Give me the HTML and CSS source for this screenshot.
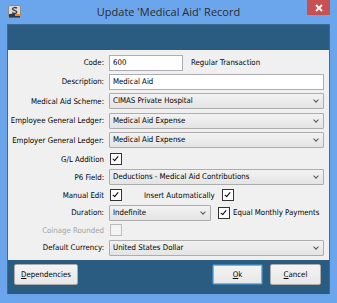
FILE: index.html
```html
<!DOCTYPE html>
<html lang="en">
<head>
    <meta charset="UTF-8">
    <meta name="viewport" content="width=device-width, initial-scale=1.0">
    <title>Update 'Medical Aid' Record</title>
    <link rel="stylesheet" href="styles.css">
</head>
<body>
    <div class="window">
        <div class="titlebar">
            <svg class="app-icon" width="13" height="13" viewBox="0 0 13 13">
                <rect x="0.5" y="0.5" width="12" height="12" rx="1.5" fill="#d9d9d9" stroke="#8c8c8c"/>
                <rect x="1" y="9" width="11" height="3.5" fill="#2b3a4a"/>
                <rect x="7" y="9" width="5.5" height="2" fill="#f08a1c"/>
                <path d="M9 3.2 C8 2.2 4.5 2.2 4.5 4 C4.5 5.8 8.8 5 8.8 7 C8.8 8.8 5 8.8 4 7.8" fill="none" stroke="#3a3a3a" stroke-width="1.3"/>
            </svg>
            <div class="title">Update 'Medical Aid' Record</div>
            <div class="close">
                <svg width="8" height="8" viewBox="0 0 8 8">
                    <path d="M1 1 L7 7 M7 1 L1 7" stroke="#fff" stroke-width="1.8"/>
                </svg>
            </div>
        </div>

        <div class="client">
            <div class="banner"></div>

            <div class="form">
                <div class="lbl">Code:</div>
                <div class="field">
                    <div class="edit code">600</div>
                    <span class="note">Regular Transaction</span>
                </div>

                <div class="lbl">Description:</div>
                <div class="field"><div class="edit wide">Medical Aid</div></div>

                <div class="lbl">Medical Aid Scheme:</div>
                <div class="field"><div class="combo wide">CIMAS Private Hospital<span class="chev"></span></div></div>

                <div class="lbl">Employee General Ledger:</div>
                <div class="field"><div class="combo wide">Medical Aid Expense<span class="chev"></span></div></div>

                <div class="lbl">Employer General Ledger:</div>
                <div class="field"><div class="combo wide">Medical Aid Expense<span class="chev"></span></div></div>

                <div class="lbl">G/L Addition</div>
                <div class="field"><span class="check on"></span></div>

                <div class="lbl">P6 Field:</div>
                <div class="field"><div class="combo wide">Deductions - Medical Aid Contributions<span class="chev"></span></div></div>

                <div class="lbl">Manual Edit</div>
                <div class="field">
                    <span class="check on"></span>
                    <span class="insert-lbl">Insert Automatically</span>
                    <span class="check on"></span>
                </div>

                <div class="lbl">Duration:</div>
                <div class="field">
                    <div class="combo duration">Indefinite<span class="chev"></span></div>
                    <span class="check on"></span>
                    <span class="check-lbl">Equal Monthly Payments</span>
                </div>

                <div class="lbl disabled">Coinage Rounded</div>
                <div class="field"><span class="check off"></span></div>

                <div class="lbl">Default Currency:</div>
                <div class="field"><div class="combo wide">United States Dollar<span class="chev"></span></div></div>
            </div>

            <div class="footer">
                <button class="btn deps"><u>D</u>ependencies</button>
                <div class="spacer"></div>
                <button class="btn default"><u>O</u>k</button>
                <button class="btn"><u>C</u>ancel</button>
            </div>
        </div>
    </div>
</body>
</html>
```

FILE: styles.css
```css
:root {
    --frame: #6ba6ec;
    --navy: #2a5b80;
    --navy-line: #3d6b92;
    --face: #f0f0f0;
    --text: #000;
}

html, body {
    margin: 0;
    padding: 0;
}

body {
    background: var(--frame);
    font-family: "DejaVu Sans Condensed", "DejaVu Sans", sans-serif;
    font-stretch: condensed;
    font-size: 7.8px;
    color: var(--text);
}

.window {
    width: 337px;
    height: 303px;
    box-sizing: border-box;
    padding: 0 7px 10px 7px;
    background: var(--frame);
}

/* Title bar */
.titlebar {
    height: 24px;
    display: grid;
    grid-template-columns: 23px 1fr 23px;
    align-items: start;
}

.app-icon {
    margin: 5px 0 0 1px;
    display: block;
}

.title {
    font-family: "Open Sans", "Liberation Sans", sans-serif;
    font-stretch: normal;
    font-size: 11px;
    color: #2b2b2b;
    text-align: center;
    line-height: 24px;
}

.close {
    height: 15px;
    background: #c75050;
    display: flex;
    justify-content: center;
    align-items: center;
}

.close svg {
    display: block;
}

/* Client area */
.client {
    height: 269px;
    border: 1px solid var(--navy-line);
    border-bottom: none;
    background: var(--navy);
    display: flex;
    flex-direction: column;
}

.banner {
    height: 25px;
}

.form {
    background: var(--face);
    height: 210px;
    box-sizing: border-box;
    padding: 3px 5px 4px 0;
    display: grid;
    grid-template-columns: 96px 215px;
    grid-template-rows: 19px 19px 20px 19px 20px 18px 18px 18px 17px 18px 17px;
    column-gap: 5px;
}

.lbl {
    text-align: right;
    align-self: center;
    white-space: nowrap;
}

.lbl.disabled {
    color: #a3a3a3;
}

.field {
    display: flex;
    align-items: center;
    white-space: nowrap;
}

.edit {
    height: 16px;
    box-sizing: border-box;
    border: 1px solid #abadb3;
    background: #fff;
    padding: 0 3px;
    line-height: 14px;
}

.edit.code {
    width: 74px;
}

.wide {
    width: 215px;
}

.note {
    margin-left: 8px;
}

.combo {
    position: relative;
    height: 16px;
    box-sizing: border-box;
    border: 1px solid #adadad;
    border-radius: 1px;
    background: linear-gradient(#f2f2f2, #e4e4e4);
    padding: 0 3px;
    line-height: 14px;
}

.combo.duration {
    width: 102px;
}

.chev {
    position: absolute;
    right: 5px;
    top: 4px;
    width: 3px;
    height: 3px;
    border-right: 1px solid #555;
    border-bottom: 1px solid #555;
    transform: rotate(45deg);
}

.check {
    width: 12px;
    height: 12px;
    box-sizing: border-box;
    border: 1px solid #333;
    background: #fff;
    margin-left: 1px;
    position: relative;
}

.check.on::after {
    content: "";
    position: absolute;
    left: 3px;
    top: 1px;
    width: 2px;
    height: 5px;
    border-right: 1.5px solid #000;
    border-bottom: 1.5px solid #000;
    transform: rotate(40deg);
}

.check.off {
    border-color: #bcbcbc;
    background: #f4f4f4;
}

.insert-lbl {
    margin-left: 22px;
    margin-right: 6px;
}

.duration + .check {
    margin-left: 7px;
}

.check-lbl {
    margin-left: 3px;
}

/* Footer */
.footer {
    flex: 1;
    display: flex;
    padding: 4px 8px 0 6px;
    gap: 7px;
}

.spacer {
    flex: 1;
}

.btn {
    height: 21px;
    width: 51px;
    padding: 0;
    font: inherit;
    color: #000;
    border: 1px solid #acacac;
    border-radius: 2px;
    background: linear-gradient(#f4f4f4, #e7e7e7);
}

.btn.deps {
    width: 64px;
}

.btn.default {
    border-color: #3c7fb1;
    box-shadow: inset 0 0 0 1px #7ab3e6;
}
```
